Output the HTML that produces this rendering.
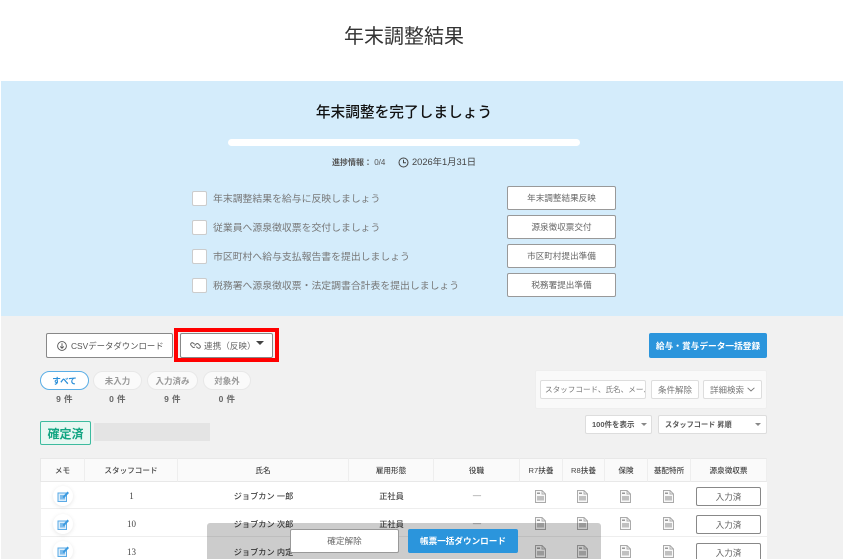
<!DOCTYPE html>
<html lang="ja"><head><meta charset="utf-8"><title>年末調整結果</title>
<style>
html,body{margin:0;padding:0;width:843px;height:559px;overflow:hidden;background:#fff}
body{font-family:"Liberation Sans","Noto Sans CJK JP",sans-serif;color:#444}
#w{position:relative;width:843px;height:559px;overflow:hidden;background:#fff;filter:blur(.3px)}
.a{position:absolute;box-sizing:border-box;white-space:nowrap}
.c{display:flex;align-items:center;justify-content:center}
.btn{background:#fff;border:1px solid #999;border-radius:2px;color:#666;font-size:8.6px;display:flex;align-items:center;justify-content:center}
.cb{width:15px;height:15px;background:#fff;border:1px solid #ccc;border-radius:2px}
.tl{font-size:9.85px;color:#777;line-height:16px}
.pill{height:19px;border-radius:10px;background:#fafafa;border:1px solid #e8e8e8;color:#999;font-size:8.5px;font-weight:bold}
.cnt{font-size:8.5px;font-weight:bold;color:#666;text-align:center;top:394px;line-height:11px;letter-spacing:.05em}
.wb{background:#fff;border:1px solid #ddd;border-radius:2px;font-size:8.5px;color:#666}
.th{top:458px;height:24px;background:#fafafa;border-right:1px solid #eee;border-top:1px solid #e8e8e8;border-bottom:1px solid #e8e8e8;font-size:7.6px;font-weight:500;color:#444}
.row{left:41px;width:726px;height:27px;background:#fff;border-bottom:1px solid #eee}
.td{font-size:8.2px;font-weight:500;color:#444;height:27px}
.n{font-family:"Liberation Serif",serif;font-size:9px;font-weight:normal;color:#444}
.ic{width:11px;height:13px}
.memo{width:20px;height:20px;border-radius:50%;background:#fff;box-shadow:0 1px 4px rgba(0,0,0,.1)}
.in{left:696px;width:65px;height:19px;background:#fff;border:1px solid #888;border-radius:2px;font-size:8.6px;color:#666}
</style></head><body><div id="w">
<div class="a c" style="left:204px;width:400px;top:18px;height:32px;font-size:20px;color:#333">年末調整結果</div>

<div class="a" style="left:1px;top:81px;width:842px;height:235px;background:#d4ecfb"></div>
<div class="a" style="left:1px;top:316px;width:842px;height:243px;background:#f1f1f1"></div>

<div class="a c" style="left:204px;width:400px;top:99px;height:24px;font-size:14.7px;font-weight:500;color:#111">年末調整を完了しましょう</div>
<div class="a" style="left:228px;top:139px;width:352px;height:7px;background:#fff;border-radius:4px"></div>
<div class="a" style="left:332px;top:157px;font-size:8px;font-weight:bold;color:#555;line-height:12px">進捗情報： <span style="font-weight:normal">0/4</span></div>
<svg class="a" style="left:398px;top:157px" width="11" height="11" viewBox="0 0 11 11" fill="none" stroke="#444" stroke-width="1"><circle cx="5.5" cy="5.5" r="4.5"/><path d="M5.5 2.8V5.7H8"/></svg>
<div class="a" style="left:412px;top:156px;font-size:9.3px;color:#444;line-height:13px">2026年1月31日</div>

<div class="a cb" style="left:192px;top:191px"></div><div class="a tl" style="left:213px;top:192px">年末調整結果を給与に反映しましょう</div>
<div class="a cb" style="left:192px;top:220px"></div><div class="a tl" style="left:213px;top:221px">従業員へ源泉徴収票を交付しましょう</div>
<div class="a cb" style="left:192px;top:249px"></div><div class="a tl" style="left:213px;top:250px">市区町村へ給与支払報告書を提出しましょう</div>
<div class="a cb" style="left:192px;top:278px"></div><div class="a tl" style="left:213px;top:279px">税務署へ源泉徴収票・法定調書合計表を提出しましょう</div>

<div class="a btn" style="left:507px;top:186px;width:109px;height:24px">年末調整結果反映</div>
<div class="a btn" style="left:507px;top:215px;width:109px;height:24px">源泉徴収票交付</div>
<div class="a btn" style="left:507px;top:244px;width:109px;height:24px">市区町村提出準備</div>
<div class="a btn" style="left:507px;top:273px;width:109px;height:24px">税務署提出準備</div>

<div class="a btn" style="left:46px;top:333px;width:127px;height:25px;justify-content:flex-start;padding-left:10px;font-size:8.4px;color:#555;border-color:#888">
<svg width="10" height="10" viewBox="0 0 10 10" fill="none" stroke="#555" stroke-width=".9" style="margin-right:4px"><circle cx="5" cy="5" r="4.4"/><path d="M5 2.3V7.2M3.2 5.5L5 7.3 6.8 5.5"/></svg>CSVデータダウンロード</div>
<div class="a" style="left:174px;top:328px;width:105px;height:34px;border:4px solid #f00"></div>
<div class="a btn" style="left:180px;top:333px;width:93px;height:25px;justify-content:flex-start;padding-left:9px;font-size:8.6px;color:#666;border-color:#888">
<svg width="11" height="9" viewBox="0 0 11 9" fill="none" stroke="#666" stroke-width="1" style="margin-right:3px"><path d="M4.6 3.2L3 1.9a1.6 1.6 0 0 0-2 2.4L2.6 6a1.6 1.6 0 0 0 2.2 0M6.2 5.6L8 7.1a1.6 1.6 0 0 0 2-2.4L8.4 3a1.6 1.6 0 0 0-2.2 0L4.6 4.6"/></svg>連携（反映）</div>
<div class="a" style="left:256px;top:341px;width:0;height:0;border-left:4px solid transparent;border-right:4px solid transparent;border-top:4px solid #444"></div>
<div class="a c" style="left:649px;top:333px;width:118px;height:25px;background:#2b95dc;border-radius:2px;color:#fff;font-size:8.7px;font-weight:bold">給与・賞与データ一括登録</div>

<div class="a pill c" style="left:40px;top:371px;width:49px;background:#fff;border-color:#5aaee6;color:#2b8fd8">すべて</div>
<div class="a pill c" style="left:93px;top:371px;width:49px">未入力</div>
<div class="a pill c" style="left:147px;top:371px;width:51px">入力済み</div>
<div class="a pill c" style="left:203px;top:371px;width:48px">対象外</div>
<div class="a cnt" style="left:40px;width:49px">9 件</div>
<div class="a cnt" style="left:93px;width:49px">0 件</div>
<div class="a cnt" style="left:147px;width:51px">9 件</div>
<div class="a cnt" style="left:203px;width:48px">0 件</div>

<div class="a c" style="left:40px;top:421px;width:51px;height:24px;background:#e8f7f2;border:1px solid #3dbb9f;border-radius:2px;color:#12a582;font-size:12px;font-weight:bold">確定済</div>
<div class="a" style="left:94px;top:423px;width:116px;height:18px;background:#e4e4e4"></div>

<div class="a" style="left:535px;top:370px;width:232px;height:39px;background:#f9f9f9;border:1px solid #eee;border-radius:2px"></div>
<div class="a wb" style="left:540px;top:380px;width:106px;height:19px;line-height:17px;padding-left:4px;overflow:hidden;color:#777;font-size:7.6px">スタッフコード、氏名、メール</div>
<div class="a wb c" style="left:651px;top:380px;width:48px;height:19px;color:#777">条件解除</div>
<div class="a wb c" style="left:703px;top:380px;width:59px;height:19px;color:#777">詳細検索
<svg width="8" height="5" viewBox="0 0 8 5" fill="none" stroke="#777" stroke-width=".9" style="margin-left:3px"><path d="M.6.8L4 4 7.4.8"/></svg></div>
<div class="a wb" style="left:585px;top:415px;width:67px;height:19px;line-height:17px;padding-left:6px;font-weight:bold;font-size:7.5px;color:#555">100件を表示</div>
<div class="a" style="left:641px;top:423px;border-left:3px solid transparent;border-right:3px solid transparent;border-top:3px solid #888"></div>
<div class="a wb" style="left:658px;top:415px;width:109px;height:19px;line-height:17px;padding-left:6px;font-weight:bold;font-size:7.2px;color:#555">スタッフコード 昇順</div>
<div class="a" style="left:755px;top:423px;border-left:3px solid transparent;border-right:3px solid transparent;border-top:3px solid #888"></div>

<!-- table header -->
<div class="a th c" style="left:40px;width:45px;border-left:1px solid #e8e8e8">メモ</div>
<div class="a th c" style="left:85px;width:93px">スタッフコード</div>
<div class="a th c" style="left:178px;width:171px">氏名</div>
<div class="a th c" style="left:349px;width:85px">雇用形態</div>
<div class="a th c" style="left:434px;width:86px">役職</div>
<div class="a th c" style="left:520px;width:43px">R7扶養</div>
<div class="a th c" style="left:563px;width:42px">R8扶養</div>
<div class="a th c" style="left:605px;width:43px">保険</div>
<div class="a th c" style="left:648px;width:43px">基配特所</div>
<div class="a th c" style="left:691px;width:76px">源泉徴収票</div>

<!-- rows -->
<div class="a row" style="top:482px;height:27px"></div>
<div class="a row" style="top:509px;height:28px"></div>
<div class="a row" style="top:537px;height:22px;border-bottom:0"></div>

<svg width="0" height="0" style="position:absolute"><defs>
<g id="doc"><path d="M.5.5H7L10.5 4V12.5H.5Z" fill="#f8f8f8" stroke="#aaa" stroke-width="1"/><path d="M7 .5V4H10.5" fill="none" stroke="#aaa" stroke-width=".9"/><rect x="2" y="2.5" width="3" height="1.5" fill="#999"/><rect x="2" y="6" width="7" height="4.5" fill="#c0c0c0"/></g>
<g id="memo"><rect x="1" y="3" width="8.5" height="8.5" fill="#dcedfa" stroke="#5aaae6"/><rect x="3" y="5" width="5" height="4.5" fill="#7dbcec"/><path d="M5.5 7L10.5 1.5 12 3 7 8.2Z" fill="#3d9be0"/></g>
</defs></svg>

<div class="a td c n" style="left:85px;width:93px;top:482px">1</div>
<div class="a td c n" style="left:85px;width:93px;top:510px">10</div>
<div class="a td c n" style="left:85px;width:93px;top:538px">13</div>
<div class="a td c" style="left:178px;width:171px;top:482px">ジョブカン 一郎</div>
<div class="a td c" style="left:178px;width:171px;top:510px">ジョブカン 次郎</div>
<div class="a td c" style="left:178px;width:171px;top:538px">ジョブカン 内定</div>
<div class="a td c" style="left:349px;width:85px;top:482px">正社員</div>
<div class="a td c" style="left:349px;width:85px;top:510px">正社員</div>
<div class="a td c" style="left:434px;width:86px;top:482px;font-weight:normal;color:#888">—</div>
<div class="a td c" style="left:434px;width:86px;top:510px;font-weight:normal;color:#888">—</div>

<div class="a memo c" style="left:53px;top:486px"><svg width="13" height="13"><use href="#memo"/></svg></div>
<div class="a memo c" style="left:53px;top:514px"><svg width="13" height="13"><use href="#memo"/></svg></div>
<div class="a memo c" style="left:53px;top:541px"><svg width="13" height="13"><use href="#memo"/></svg></div>

<svg class="a ic" style="left:535px;top:490px"><use href="#doc"/></svg>
<svg class="a ic" style="left:577px;top:490px"><use href="#doc"/></svg>
<svg class="a ic" style="left:620px;top:490px"><use href="#doc"/></svg>
<svg class="a ic" style="left:663px;top:490px"><use href="#doc"/></svg>
<svg class="a ic" style="left:535px;top:517px"><use href="#doc"/></svg>
<svg class="a ic" style="left:577px;top:517px"><use href="#doc"/></svg>
<svg class="a ic" style="left:620px;top:517px"><use href="#doc"/></svg>
<svg class="a ic" style="left:663px;top:517px"><use href="#doc"/></svg>
<svg class="a ic" style="left:535px;top:545px"><use href="#doc"/></svg>
<svg class="a ic" style="left:577px;top:545px"><use href="#doc"/></svg>
<svg class="a ic" style="left:620px;top:545px"><use href="#doc"/></svg>
<svg class="a ic" style="left:663px;top:545px"><use href="#doc"/></svg>

<div class="a in c" style="top:487px">入力済</div>
<div class="a in c" style="top:515px">入力済</div>
<div class="a in c" style="top:543px">入力済</div>

<!-- overlay footer -->
<div class="a" style="left:207px;top:523px;width:394px;height:36px;background:rgba(0,0,0,.2);border-radius:3px 3px 0 0"></div>
<div class="a c" style="left:290px;top:529px;width:109px;height:24px;background:#fff;border:1px solid #999;border-radius:2px;font-size:8.6px;color:#666">確定解除</div>
<div class="a c" style="left:408px;top:529px;width:110px;height:24px;background:#2b95dc;border-radius:2px;font-size:8.6px;font-weight:bold;color:#fff">帳票一括ダウンロード</div>
</div></body></html>
